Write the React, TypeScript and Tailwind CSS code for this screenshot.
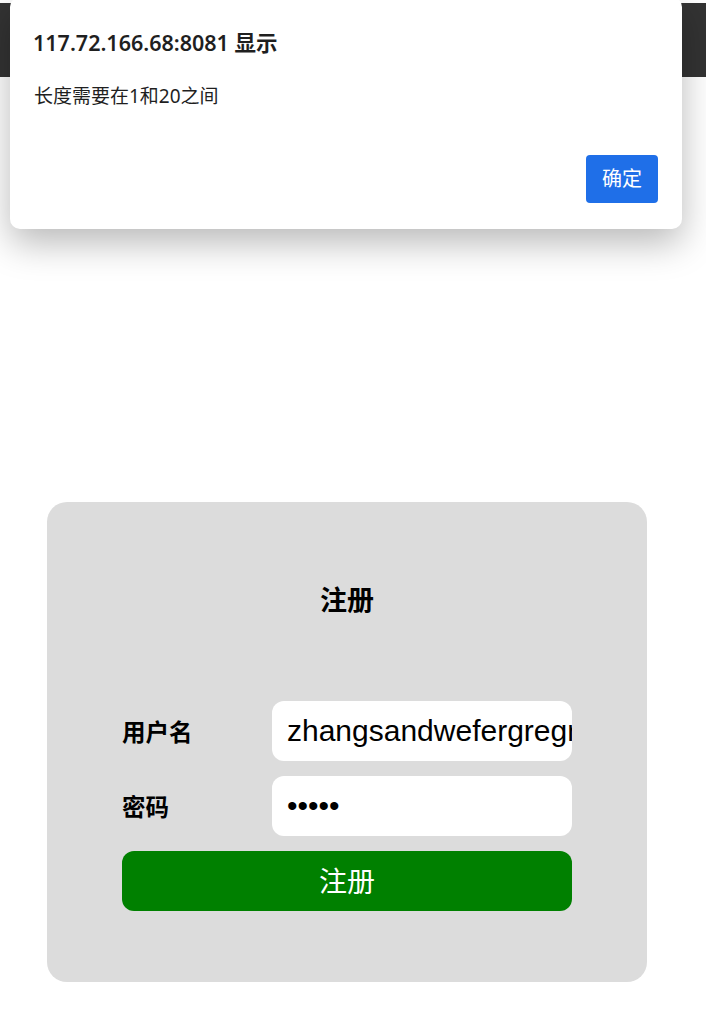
import React from 'react';

const cjk = '"Noto Sans", "Noto Sans CJK SC", sans-serif';

function AlertDialog() {
  return (
    <div
      className="absolute left-[10px] top-[-6px] h-[232px] w-[672px] rounded-[10px] bg-white shadow-[0_14px_36px_rgba(0,0,0,0.28)]"
      style={{ fontFamily: cjk }}
    >
      <div className="pl-[23px] pt-[33px] text-[21.5px] font-semibold leading-[26px] text-[#1f1f1f]">
        117.72.166.68:8081 显示
      </div>
      <div className="pl-[24px] pt-[28px] text-[19px] leading-[24px] text-[#1f1f1f]">
        长度需要在1和20之间
      </div>
      <div className="flex justify-end pr-[24px] pt-[47px]">
        <button className="h-[48px] w-[72px] rounded-[4px] bg-[#1f6fe8] text-[20px] text-white">
          确定
        </button>
      </div>
    </div>
  );
}

function Field({ label, children }: { label: string; children: React.ReactNode }) {
  return (
    <div className="flex h-[60px] items-center">
      <label className="w-[150px] pt-[3px] text-[23.5px] font-bold leading-none text-black">{label}</label>
      {children}
    </div>
  );
}

export default function App() {
  const inputCls =
    'h-[60px] w-[300px] rounded-[12px] bg-white pl-[15px] pr-0 text-[30px] text-black outline-none';
  return (
    <div className="relative min-h-[1020px] bg-white" style={{ fontFamily: cjk }}>
      <div className="mt-[3px] h-[74px] bg-[#333333]" />

      <div className="ml-[47px] mt-[425px] flex h-[480px] w-[600px] flex-col items-center rounded-[20px] bg-[#dcdcdc]">
        <h2 className="mt-[84px] text-[27px] font-bold leading-[28px] text-black">注册</h2>

        <form className="mt-[87px] flex w-[450px] flex-col gap-[15px]">
          <Field label="用户名">
            <input
              className={inputCls}
              style={{ fontFamily: '"Liberation Sans", Arial, sans-serif' }}
              defaultValue="zhangsandwefergregrgerg"
              readOnly
            />
          </Field>
          <Field label="密码">
            <input
              type="password"
              className={inputCls}
              style={{ fontFamily: '"Liberation Sans", Arial, sans-serif' }}
              defaultValue="12345"
              readOnly
            />
          </Field>
          <button
            type="button"
            className="h-[60px] w-[450px] rounded-[12px] bg-[#008000] text-[28px] text-white"
          >
            注册
          </button>
        </form>
      </div>

      <AlertDialog />
    </div>
  );
}
